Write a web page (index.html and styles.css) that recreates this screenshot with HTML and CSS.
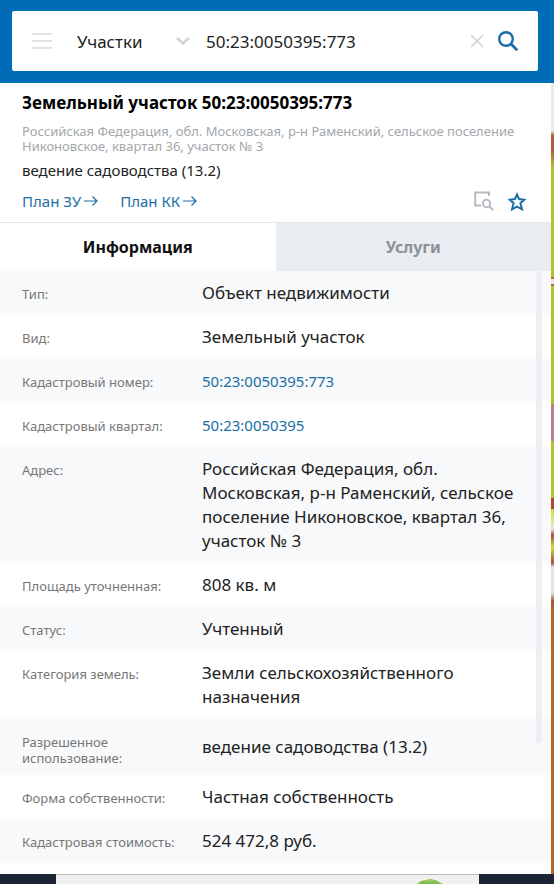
FILE: index.html
```html
<!doctype html>
<html lang="ru">
  <head>
    <meta charset="utf-8">
    <meta name="viewport" content="width=device-width, initial-scale=1">
    <title>Земельный участок 50:23:0050395:773</title>
    <link rel="stylesheet" href="styles.css">
  </head>
  <body>
    <header class="header">
      <form class="search">
        <button class="search-menu" type="button" aria-label="Меню">
          <svg width="20" height="16" viewBox="0 0 20 16" fill="none" stroke="#e2e3e7" stroke-width="2"><path d="M0 1h20M0 8h20M0 15h20"/></svg>
        </button>
        <div class="search-type">
          <select name="type" aria-label="Тип объекта">
            <option>Участки</option>
          </select>
          <svg width="14" height="8" viewBox="0 0 14 8" fill="none" stroke="#cfd2d6" stroke-width="2.400"><path d="M1 1l6 5.500 6-5.500"/></svg>
        </div>
        <input class="search-text" name="text" type="text" value="50:23:0050395:773" aria-label="Кадастровый номер">
        <button type="reset" aria-label="Очистить">
          <svg width="14" height="14" viewBox="0 0 14 14" fill="none" stroke="#cdd0d5" stroke-width="1.500"><path d="M1 1l12 12M13 1L1 13"/></svg>
        </button>
        <button type="submit" aria-label="Найти">
          <svg width="20" height="20" viewBox="0 0 20 20" fill="none" stroke="#1a6ea6"><circle cx="8" cy="8" r="6.800" stroke-width="2.400"/><path d="M12.800 12.800l6.400 6.400" stroke-width="2.800"/></svg>
        </button>
      </form>
    </header>

    <div class="content">
      <main class="panel">
        <section class="summary">
          <h1>Земельный участок 50:23:0050395:773</h1>
          <p class="address">Российская Федерация, обл. Московская, р-н Раменский, сельское поселение Никоновское, квартал 36, участок № 3</p>
          <p class="usage">ведение садоводства (13.2)</p>
          <div class="actions">
            <a href="#">План ЗУ<svg width="14" height="10" viewBox="0 0 14 10" fill="none" stroke="currentColor" stroke-width="1.200"><path d="M0 5h13M8.500 .5L13 5 8.500 9.500"/></svg></a>
            <a href="#">План КК<svg width="14" height="10" viewBox="0 0 14 10" fill="none" stroke="currentColor" stroke-width="1.200"><path d="M0 5h13M8.500 .5L13 5 8.500 9.500"/></svg></a>
            <button class="locate" type="button" aria-label="Показать на карте">
              <svg width="20" height="20" viewBox="0 0 20 20" fill="none" stroke="#b9bbc4" stroke-width="2"><path d="M15 5V1.500H1.200V14.500H7"/><circle cx="12.500" cy="12.500" r="3.700"/><path d="M15.300 15.300l4 4"/></svg>
            </button>
            <button type="button" aria-label="В избранное">
              <svg width="18" height="19" viewBox="0 0 18 19" fill="none" stroke="#1a6ea6" stroke-width="2"><path d="M9 2.500l2.100 4.600 5.100.6-3.800 3.500 1.600 6.100L9 14.600l-5 2.700 1.600-6.100L1.800 7.700l5.100-.6z"/></svg>
            </button>
          </div>
        </section>

        <nav class="tabs">
          <button class="tab active" type="button">Информация</button>
          <button class="tab" type="button">Услуги</button>
        </nav>

        <div class="info">
          <table>
            <tr><th scope="row">Тип:</th><td>Объект недвижимости</td></tr>
            <tr><th scope="row">Вид:</th><td>Земельный участок</td></tr>
            <tr><th scope="row">Кадастровый номер:</th><td><a href="#">50:23:0050395:773</a></td></tr>
            <tr><th scope="row">Кадастровый квартал:</th><td><a href="#">50:23:0050395</a></td></tr>
            <tr><th scope="row">Адрес:</th><td>Российская Федерация, обл. Московская, р-н Раменский, сельское поселение Никоновское, квартал 36, участок № 3</td></tr>
            <tr><th scope="row">Площадь уточненная:</th><td>808 кв. м</td></tr>
            <tr><th scope="row">Статус:</th><td>Учтенный</td></tr>
            <tr><th scope="row">Категория земель:</th><td>Земли сельскохозяйственного назначения</td></tr>
            <tr><th scope="row">Разрешенное использование:</th><td>ведение садоводства (13.2)</td></tr>
            <tr><th scope="row">Форма собственности:</th><td>Частная собственность</td></tr>
            <tr><th scope="row">Кадастровая стоимость:</th><td>524 472,8 руб.</td></tr>
          </table>
          <div class="scrollbar"></div>
        </div>
      </main>
      <div class="map"></div>
    </div>

    <footer class="taskbar">
      <div class="taskbar-window">
        <svg width="26" height="5" viewBox="0 0 26 5"><path d="M0 5l4-3 5-1 4-1 5 1 4 2 4 2z" fill="#7fbd4e"/><path d="M7 2l6-2 5 2-6 1z" fill="#9ad065"/></svg>
      </div>
    </footer>
  </body>
</html>
```

FILE: styles.css
```css
* {
  box-sizing: border-box;
}
body {
  display: flex;
  flex-direction: column;
  min-height: 100vh;
  margin: 0;
  background-color: #fff;
  color: #222;
  font-family: "Noto Sans", "Open Sans", sans-serif;
  font-size: 17px;
}
button, input, select {
  padding: 0;
  border: 0;
  background: none;
  color: inherit;
  font: inherit;
}
button {
  cursor: pointer;
}
svg {
  display: block;
}
a {
  color: #1a6ea6;
  text-decoration: none;
}

.header {
  padding: 11px 16px 12px 12px;
  background-color: #006bb6;
}
.search {
  display: flex;
  align-items: center;
  height: 60px;
  padding: 0 20px;
  border-radius: 2px;
  background-color: #fff;
}
.search-menu {
  margin-right: 25px;
}
.search-type {
  display: flex;
  align-items: center;
  width: 113px;
  margin-right: 16px;
}
.search-type select {
  flex: 1;
  appearance: none;
}
.search-text {
  flex: 1;
  min-width: 0;
}
.search button + button {
  margin-left: 14px;
}

.content {
  display: flex;
  flex: 1;
}
.panel {
  flex: 1;
  min-width: 0;
}

.summary {
  padding: 8px 25px 9px 22px;
  border-bottom: 1px solid #e6ebea;
}
.summary h1 {
  margin: 0 0 9px;
  color: #000;
  font-size: 17px;
  line-height: 24px;
}
.summary p {
  margin: 0;
}
.summary .address {
  color: #a3a7ab;
  font-size: 13px;
  line-height: 15px;
}
.summary .usage {
  margin: 4px 0 7px;
  font-size: 15px;
  line-height: 24px;
}
.actions {
  display: flex;
  align-items: center;
  gap: 22px;
  height: 24px;
  font-size: 15px;
}
.actions a {
  display: flex;
  align-items: center;
  gap: 3px;
}
.actions .locate {
  margin-left: auto;
}
.actions button + button {
  margin-left: -8px;
}

.tabs {
  display: flex;
}
.tab {
  flex: 1;
  height: 48px;
  background-color: #e9ecf0;
  color: #8a9197;
  font-size: 16px;
  font-weight: bold;
}
.tab.active {
  background-color: #fff;
  color: #111;
}

.info {
  position: relative;
}
.info table {
  width: 100%;
  border-collapse: collapse;
}
.info tr:nth-child(odd) {
  background-color: #f7f9fa;
}
.info th {
  width: 202px;
  padding: 15px 22px 9px;
  color: #777;
  font-size: 13px;
  font-weight: normal;
  line-height: 16px;
  text-align: left;
  vertical-align: top;
}
.info td {
  padding: 10px 24px 10px 0;
  line-height: 24px;
}
.info td a {
  font-size: 15px;
}
.scrollbar {
  position: absolute;
  top: 0;
  right: 9px;
  bottom: 120px;
  width: 6px;
  border-radius: 3px;
  background-color: #edeff2;
}

/* visible edge of the map */
.map {
  width: 3px;
  background: linear-gradient(#e9e9e9 48px, #b65a3a 52px, #b65a3a 68px, #b1c22c 84px, #b1c22c 194px, #a66a4a 194px, #a66a4a 196px, #f0e8e0 196px, #f0e8e0 201px, #a66a4a 201px, #a66a4a 203px, #b1c22c 203px, #b1c22c 321px, #b8808a 321px, #b8808a 358px, #b1c22c 358px, #b1c22c 415px, #b5453a 415px, #b5453a 426px, #c8dc3c 426px, #e9e9e0 446px, #b5453a 452px, #c8dc3c 464px, #b5453a 480px, #e2e4de 484px, #e2e4de 510px, #a84f30 518px, #b3682c 526px);
}

.taskbar {
  display: flex;
  height: 10px;
  padding: 0 75px 0 56px;
  background-color: #1d2433;
}
.taskbar-window {
  display: flex;
  flex: 1;
  align-items: flex-end;
  justify-content: flex-end;
  padding-right: 36px;
  border-top: 1px solid #bbb;
  background-color: #f0f0f0;
}
```
